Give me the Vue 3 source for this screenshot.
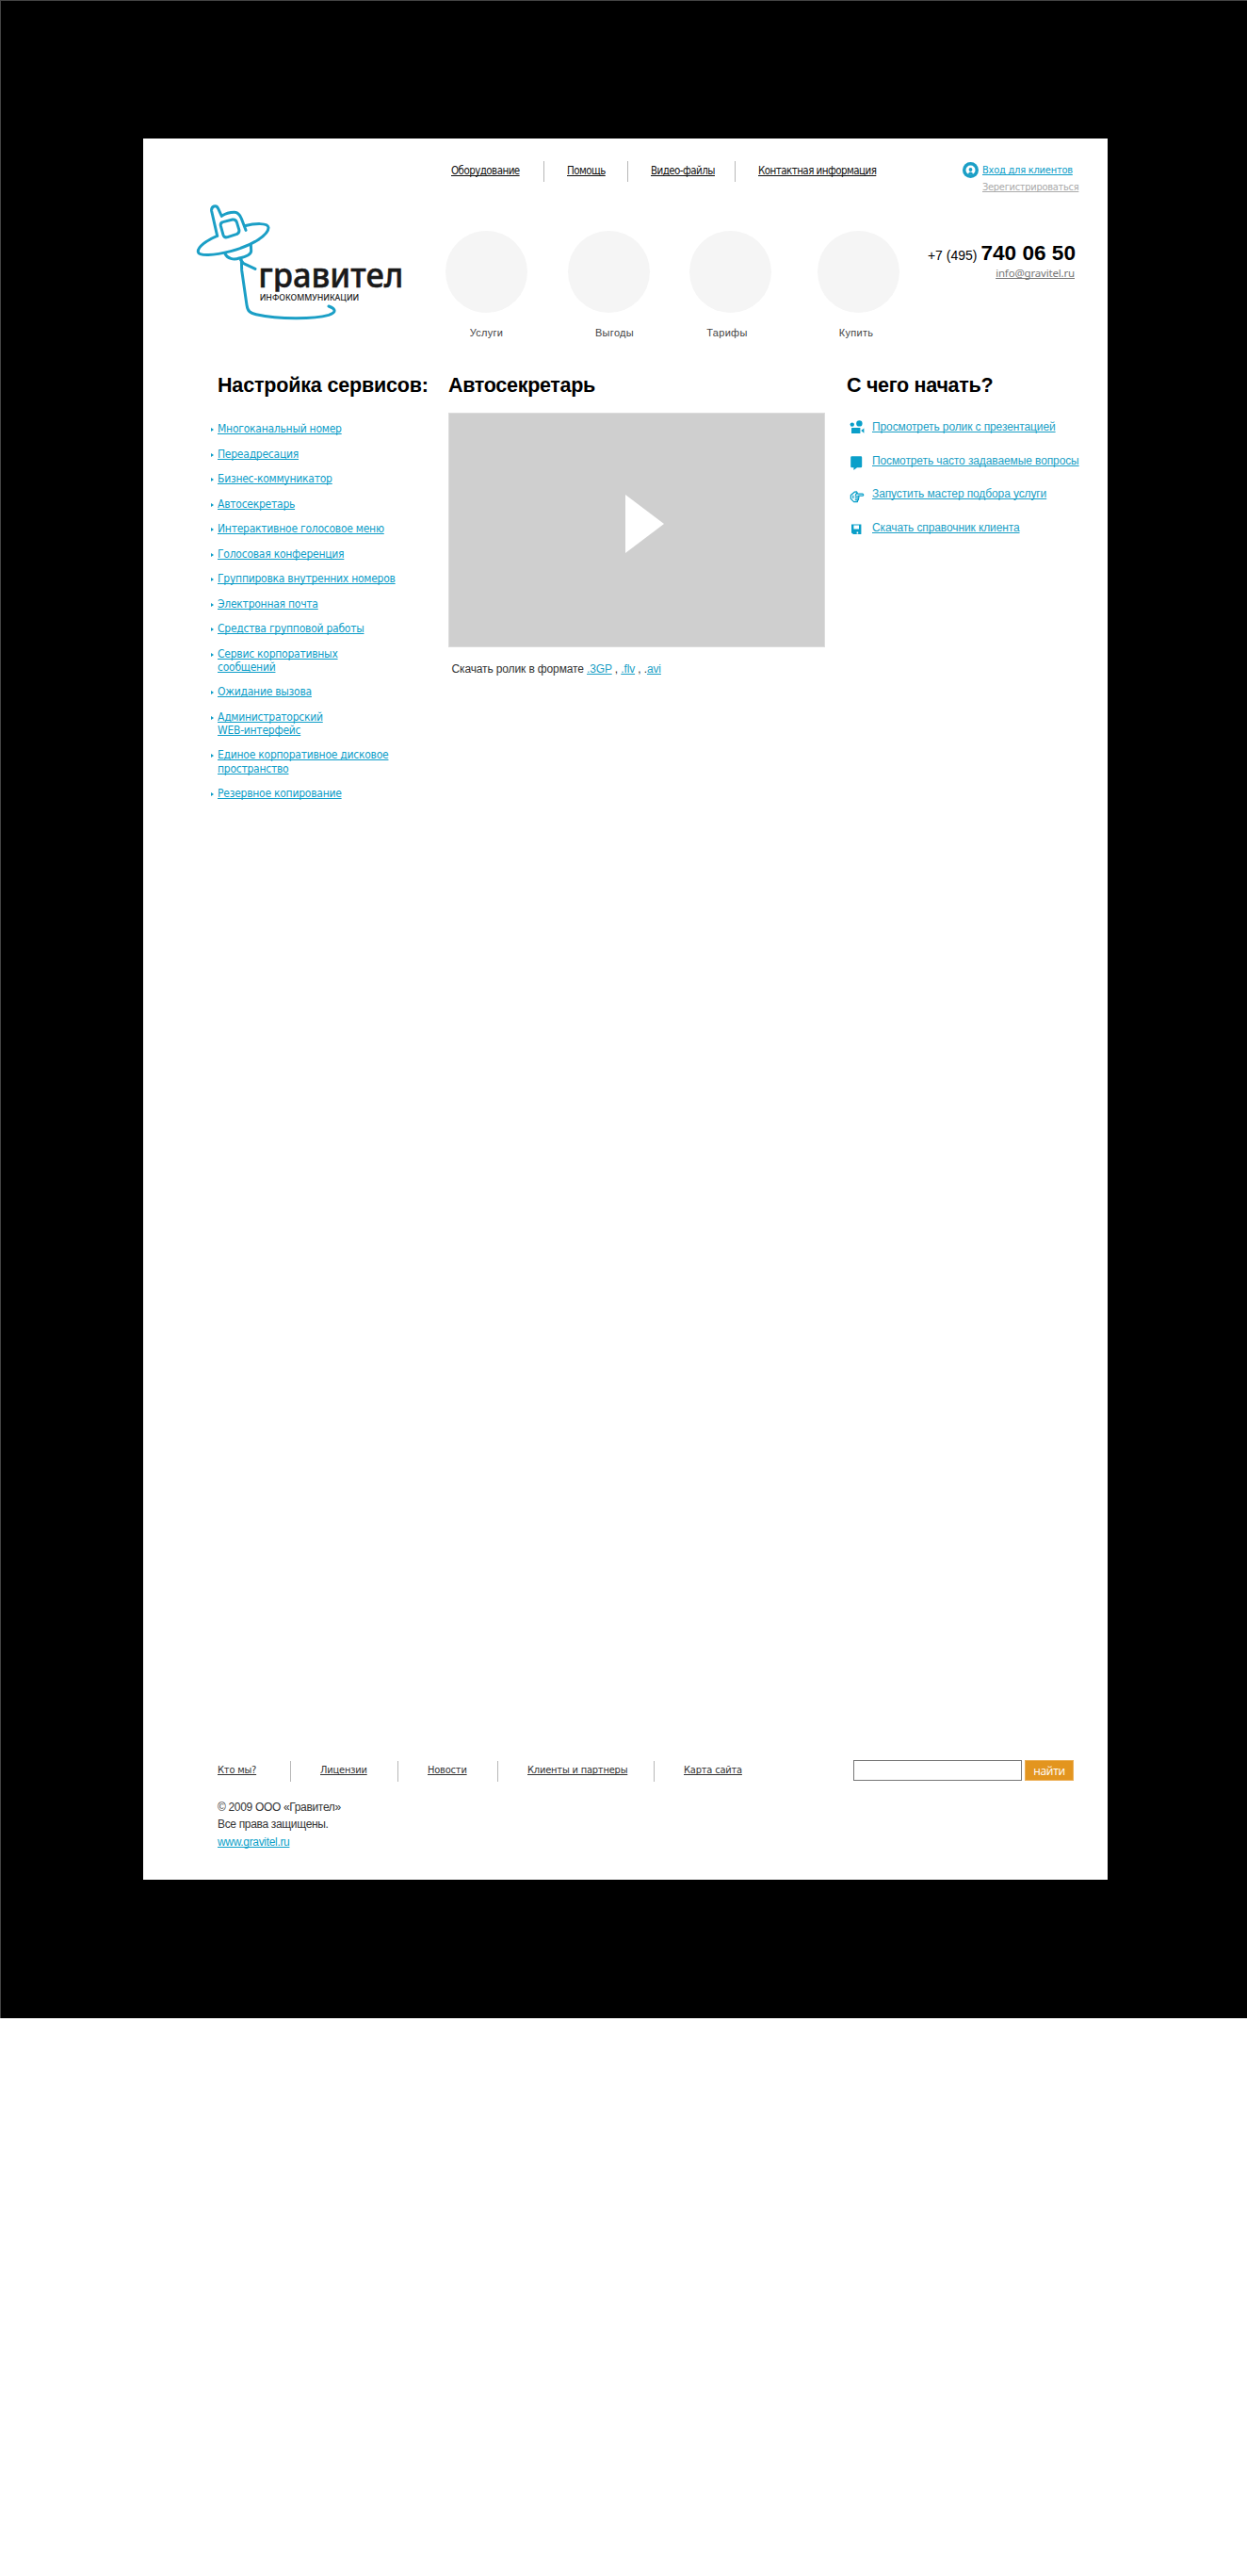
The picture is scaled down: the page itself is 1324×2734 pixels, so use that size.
<script setup>
const topNav = ['Оборудование', 'Помощь', 'Видео-файлы', 'Контактная информация']
const sections = ['Услуги', 'Выгоды', 'Тарифы', 'Купить']
const services = [
  ['Многоканальный номер'],
  ['Переадресация'],
  ['Бизнес-коммуникатор'],
  ['Автосекретарь'],
  ['Интерактивное голосовое меню'],
  ['Голосовая конференция'],
  ['Группировка внутренних номеров'],
  ['Электронная почта'],
  ['Средства групповой работы'],
  ['Сервис корпоративных', 'сообщений'],
  ['Ожидание вызова'],
  ['Администраторский', 'WEB-интерфейс'],
  ['Единое корпоративное дисковое', 'пространство'],
  ['Резервное копирование'],
]
const bottomNav = ['Кто мы?', 'Лицензии', 'Новости', 'Клиенты и партнеры', 'Карта сайта']
</script>

<template>
  <div class="page">
    <div class="sheet">
      <header class="header">
        <svg class="logo" viewBox="0 0 750 480" width="250" height="160">
          <defs>
            <clipPath id="brand-clip"><rect x="240" y="230" width="500" height="99" /></clipPath>
          </defs>
          <g fill="none" stroke="#1b9fc6" stroke-width="9" stroke-linecap="round" stroke-linejoin="round">
            <path d="M122 151 L104 72 C102 56 119 51 125 64 L136 88 C148 80 164 76 176 76 C188 76 194 84 199 96 L213 133" />
            <path d="M122 151 C88 165 59 187 61 202 C64 216 111 214 165 200 C236 181 287 147 285 124 C283 109 243 111 209 119" />
            <path d="M140 107 L171 99 Q181 98 184 107 L191 130 Q194 140 185 145 L155 155 Q144 158 141 148 L133 119 Q131 109 140 107 Z" />
            <path d="M147 208 C154 223 174 229 192 222 C213 218 230 211 230 199 L229 178" />
            <path d="M197 228 L206 239 L243 256 M199 228 L200 260 L216 371 C219 391 226 397 246 401 C320 417 430 416 477 403 C502 395 501 384 477 375" />
          </g>
          <text class="brand" x="253" y="315" textLength="462" lengthAdjust="spacingAndGlyphs" clip-path="url(#brand-clip)">гравител</text>
          <text class="tagline" x="257" y="357" textLength="317" lengthAdjust="spacingAndGlyphs">ИНФОКОММУНИКАЦИИ</text>
        </svg>

        <div class="center">
          <nav class="topnav">
            <div v-for="n in topNav" :key="n" class="cell"><a>{{ n }}</a></div>
          </nav>
          <div class="sections">
            <div v-for="s in sections" :key="s" class="section">
              <span class="disc"></span>
              <span class="label">{{ s }}</span>
            </div>
          </div>
        </div>

        <div class="account">
          <div class="login">
            <svg width="17" height="17" viewBox="0 0 17 17">
              <circle cx="8.5" cy="8.5" r="8.5" fill="#1b9fc6" />
              <circle cx="8.5" cy="8.5" r="5" fill="#fff" />
              <circle cx="8.5" cy="8" r="1.9" fill="#1b9fc6" />
              <path d="M6 13.8 C6 11.2 7 10.4 8.5 10.4 S11 11.2 11 13.8 Z" fill="#1b9fc6" />
            </svg>
            <div class="links">
              <a class="enter">Вход для клиентов</a>
              <a class="register">Зерегистрироваться</a>
            </div>
          </div>
          <div class="phone">+7 (495) <b>740 06 50</b></div>
          <a class="email">info@gravitel.ru</a>
        </div>
      </header>

      <main class="main">
        <section class="col-services">
          <h2>Настройка сервисов:</h2>
          <ul>
            <li v-for="item in services" :key="item[0]">
              <svg class="bullet" width="3" height="4" viewBox="0 0 3 4"><path d="M0 0 L3 2 L0 4 Z" fill="#0c9dc8" /></svg>
              <a><template v-for="(line, i) in item" :key="line"><br v-if="i">{{ line }}</template></a>
            </li>
          </ul>
        </section>

        <section class="col-video">
          <h2>Автосекретарь</h2>
          <div class="video">
            <svg width="42" height="62" viewBox="0 0 42 62"><path d="M0 0 L41 31 L0 62 Z" fill="#fff" /></svg>
          </div>
          <p class="caption">Скачать ролик в формате <a>.3GP</a> , <a>.flv</a> , .<a>avi</a></p>
        </section>

        <section class="col-start">
          <h2>С чего начать?</h2>
          <ul>
            <li>
              <svg width="16" height="16" viewBox="0 0 16 16" fill="#0a9fc9">
                <circle cx="2.8" cy="5.6" r="2.2" /><circle cx="10.4" cy="4.4" r="3.2" />
                <rect x="2" y="9" width="9.4" height="6" rx=".6" />
                <path d="M12.2 12 L15.4 9.4 V14.8 Z" />
              </svg>
              <a>Просмотреть ролик с презентацией</a>
            </li>
            <li>
              <svg width="16" height="16" viewBox="0 0 16 16" fill="#0a9fc9">
                <path d="M2.4 1.2 H12 Q13.2 1.2 13.2 2.4 V12 Q13.2 13.2 12 13.2 H8 L4.4 16 V13.2 H2.4 Q1.2 13.2 1.2 12 V2.4 Q1.2 1.2 2.4 1.2 Z" />
              </svg>
              <a>Посмотреть часто задаваемые вопросы</a>
            </li>
            <li>
              <svg width="16" height="16" viewBox="0 0 16 16" fill="none" stroke="#0a9fc9" stroke-width="1.3" stroke-linejoin="round" stroke-linecap="round">
                <path d="M5.2 4.2 L1.4 7.6 V11.4 L4.6 14.6 H8.4 V13 M5.2 4.2 L7.6 4 L8.2 5 L6.4 7 M7.4 6.2 H14 Q15.4 7.2 14 8.2 H9.6 M3.8 8.2 V10.6 M6.2 8.6 H9.8 V10.6 H6.2 M9.4 10.8 V12.7 H6.2" />
              </svg>
              <a>Запустить мастер подбора услуги</a>
            </li>
            <li>
              <svg width="16" height="16" viewBox="0 0 16 16">
                <path d="M2 2.6 H12.4 V13 H4 L2 11.4 Z" fill="#0a9fc9" />
                <path d="M4.4 3.4 H10 V7.4 H4.4 Z M7.6 10.4 H9.2 V12.4 H7.6 Z" fill="#fff" />
              </svg>
              <a>Скачать справочник клиента</a>
            </li>
          </ul>
        </section>
      </main>

      <footer class="footer">
        <div class="row">
          <nav class="bottomnav">
            <div v-for="n in bottomNav" :key="n" class="cell"><a>{{ n }}</a></div>
          </nav>
          <form class="search">
            <input type="text">
            <button type="button">найти</button>
          </form>
        </div>
        <p class="copy">© 2009 ООО «Гравител»<br>Все права защищены.<br><a>www.gravitel.ru</a></p>
      </footer>
    </div>
  </div>
</template>

<style>
body { margin: 0; background: #fff; }
</style>

<style scoped>
* { box-sizing: border-box; }
a { text-decoration: underline; text-underline-offset: 1px; text-decoration-thickness: 1px; text-decoration-skip-ink: none; }
ul { list-style: none; margin: 0; padding: 0; }
.page {
  width: 1324px; height: 2142px; background: #000; overflow: hidden;
  border-top: 1px solid #444; border-left: 1px solid #444;
  font-family: "Liberation Sans", Arial, sans-serif; font-size: 12px; color: #333;
}
.sheet {
  width: 1024px; height: 1848px; margin: 146px 0 0 151px; background: #fff;
  display: flex; flex-direction: column;
}

.header { display: flex; height: 248px; }
.logo { display: block; flex: none; margin: 53px 0 0 38px; }
.brand { font-family: "Noto Sans", sans-serif; font-size: 106px; font-weight: 500; fill: #1a1a1a; stroke: #1a1a1a; stroke-width: 1.5; }
.tagline { font-family: "Noto Sans", sans-serif; font-size: 25px; font-weight: 500; fill: #1a1a1a; }
.center { width: 540px; margin-left: 33px; padding-top: 24px; }
.topnav { display: grid; grid-template-columns: 98px 89px 114px 160px; margin-left: 6px; }
.cell {
  height: 22px; padding-left: 24px; border-left: 1px solid #b8b8b8; line-height: 20px;
  font-family: "DejaVu Sans Condensed", "DejaVu Sans", sans-serif; font-stretch: condensed;
  font-size: 11.5px; letter-spacing: -.56px; white-space: nowrap; color: #111;
}
.cell:first-child { border-left: 0; padding-left: 0; }
.sections { display: grid; grid-template-columns: 130px 129px 135.5px 87px; margin-top: 52px; }
.section { width: 87px; display: flex; flex-direction: column; align-items: center; }
.disc { width: 87px; height: 87px; border-radius: 50%; background: #f5f5f5; }
.label { margin-top: 13px; font-size: 11px; line-height: 16px; color: #444; letter-spacing: .3px; }
.section:nth-child(2) .label { margin-left: 12px; }
.section:nth-child(3) .label { margin-right: 7px; }
.section:nth-child(4) .label { margin-right: 4px; }

.account { width: 128px; padding-top: 24px; white-space: nowrap; }
.login {
  display: flex; gap: 4px; margin-left: 9px; line-height: 18px; height: 36px;
  font-family: "DejaVu Sans Condensed", "DejaVu Sans", sans-serif; font-stretch: condensed;
  font-size: 11px; letter-spacing: -.29px;
}
.login svg { margin-top: 1px; flex: none; }
.links { display: flex; flex-direction: column; padding-top: 1px; }
.enter { color: #0c9dc8; letter-spacing: -.24px; }
.register { color: #aaa; }
.phone { margin-top: 49px; width: 129px; display: flex; justify-content: flex-end; align-items: baseline; gap: 4px; line-height: 25px; font-size: 14px; color: #000; }
.phone b { font-size: 22.6px; }
.email { display: block; width: 128px; text-align: right; font-family: "Noto Sans", sans-serif; font-size: 11.5px; letter-spacing: -.18px; line-height: 16px; color: #777; margin-top: -2px; }

.main { display: grid; grid-template-columns: 252px 424px 260px; padding-left: 72px; }
h2 { margin: 0; padding-top: 1px; font-size: 21.5px; line-height: 27px; font-weight: 700; color: #000; white-space: nowrap; letter-spacing: -.3px; }
.col-services h2 { padding-left: 7px; letter-spacing: -.17px; }
.col-services ul { margin-top: 25px; }
.col-services li {
  display: flex; gap: 4px; margin-bottom: 12.3px; color: #0c9dc8; line-height: 14.2px; white-space: nowrap;
  font-family: "DejaVu Sans Condensed", "DejaVu Sans", sans-serif; font-stretch: condensed;
  font-size: 12px; letter-spacing: -.25px;
}
.bullet { flex: none; margin-top: 6px; }
.video {
  width: 400px; height: 249px; margin-top: 15px; background: #cfcfcf; border: 1px solid #dcdcdc;
  display: flex; align-items: center; justify-content: center;
}
.video svg { margin: -14px 0 0 17px; }
.caption { margin: 15px 0 0 3.5px; line-height: 16px; font-size: 12px; letter-spacing: -.13px; }
.caption a { color: #1b9fc6; }
.col-start h2 { margin-left: -1px; }
.col-start ul { margin-top: 22px; }
.col-start li { display: flex; gap: 8px; height: 35.6px; padding-left: 2px; line-height: 16px; color: #1b9fc6; white-space: nowrap; letter-spacing: -.11px; }
.col-start svg { flex: none; }
.col-start li:nth-child(n+2) svg { margin-top: 2px; }

.footer { margin-top: auto; height: 127px; padding-left: 79px; }
.row { display: flex; }
.bottomnav { display: grid; grid-template-columns: 77px 114px 106px 166px 212px; padding-top: 1px; }
.bottomnav .cell { color: #333; padding-left: 31px; font-size: 11px; letter-spacing: -.2px; }
.bottomnav .cell:first-child { padding-left: 0; }
.search { display: flex; gap: 3px; height: 22px; }
.search input { width: 179px; height: 22px; border: 1px solid #777; padding: 0; background: #fff; border-radius: 0; }
.search button { width: 52px; height: 22px; border: 1px solid #edb057; background: #e3951f; color: #fff; padding: 0; font-family: "Open Sans", sans-serif; font-size: 12px; letter-spacing: -.3px; line-height: 19px; }
.copy { margin: 18px 0 0; line-height: 18.4px; font-size: 12px; letter-spacing: -.33px; }
.copy a { color: #0a9fc9; }
</style>
